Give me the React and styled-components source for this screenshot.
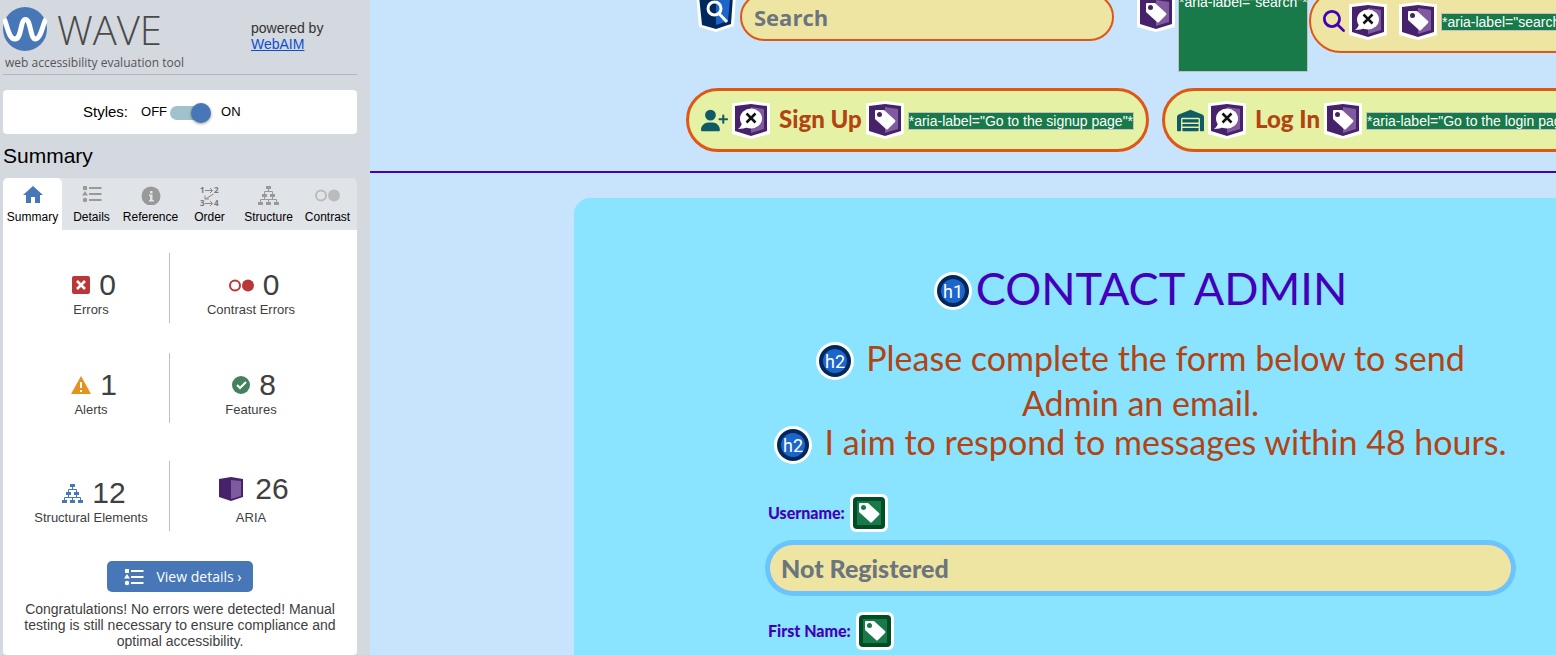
import React from "react";
import styled, { createGlobalStyle } from "styled-components";
import { FaUserPlus, FaWarehouse, FaMagnifyingGlass } from "react-icons/fa6";

const sans = '"Liberation Sans", Arial, sans-serif';
const open = '"Open Sans", "Noto Sans", sans-serif';
const display = 'Lato, "Open Sans", sans-serif';

const GlobalStyle = createGlobalStyle`
  *, *::before, *::after { box-sizing: border-box; }
  body { margin: 0; background: #c8e3fc; font-family: ${sans}; overflow: hidden; }
  h1, h2, p { margin: 0; font-weight: 400; }
  button, input { font-family: inherit; }
  svg { display: block; flex: none; }
`;

const Page = styled.div`
  display: flex;
  height: 100vh;
  overflow: hidden;
`;

/* ---------- sidebar ---------- */

const Sidebar = styled.aside`
  flex: 0 0 370px;
  display: flex;
  flex-direction: column;
  padding: 0 13px 0 3px;
  background: #d4d8df;
`;

const Brand = styled.header`
  display: flex;
  justify-content: space-between;
  height: 75px;
  border-bottom: 1px solid #b2b6bb;
  color: #4a4a4a;
`;

const BrandTop = styled.div`
  display: flex;
  align-items: center;
  gap: 10px;
  height: 48px;
  padding-top: 10px;
`;

const BrandName = styled.span`
  padding-top: 2px;
  font: 300 40px/44px ${open};
`;

const Tagline = styled.p`
  padding: 7px 0 0 2px;
  font: 400 12px/16px ${open};
  color: #555;
  white-space: nowrap;
`;

const Powered = styled.p`
  width: 106px;
  padding-top: 20px;
  font-size: 14px;
  line-height: 16px;
  color: #333;

  a { display: block; color: #0b4fd0; }
`;

const StylesBar = styled.div`
  display: flex;
  align-items: center;
  height: 44px;
  margin-top: 15px;
  padding: 0 0 2px 80px;
  border-radius: 4px;
  background: #fff;
  font-size: 13px;
  color: #000;
`;

const StylesLabel = styled.label`
  margin-right: 13px;
  font-size: 15px;
`;

const Toggle = styled.input`
  appearance: none;
  width: 38px;
  height: 14px;
  margin: 3px 13px 0 3px;
  border-radius: 7px;
  background: #a0c2cd;

  &::before {
    content: "";
    display: block;
    width: 20px;
    height: 20px;
    margin: -3px 0 0 21px;
    border-radius: 50%;
    background: #4777b6;
    box-shadow: 0 1px 3px rgba(0, 0, 0, 0.4);
  }
`;

const SummaryTitle = styled.h1`
  height: 44px;
  padding-top: 10px;
  font-size: 21px;
  line-height: 24px;
  color: #000;
`;

const Tabs = styled.nav`
  display: grid;
  grid-template-columns: repeat(6, 1fr);
  height: 52px;
  border-radius: 5px 5px 0 0;
  background: #e0e3e8;
`;

const Tab = styled.button`
  display: flex;
  flex-direction: column;
  align-items: center;
  justify-content: space-between;
  min-width: 0;
  padding: 7px 0 6px;
  border: 0;
  border-radius: 5px 5px 0 0;
  background: ${(p) => (p.$active ? "#fff" : "transparent")};
  color: #000;
  font-size: 12px;
  line-height: 14px;
  white-space: nowrap;
`;

const Panel = styled.section`
  flex: 1;
  display: flex;
  flex-direction: column;
  align-items: center;
  padding-top: 23px;
  border-radius: 0 0 4px 4px;
  background: #fff;
  color: #404040;
`;

const Stats = styled.div`
  align-self: flex-start;
  display: grid;
  grid-template-columns: 157px 162px;
  margin-left: 10px;
`;

const Stat = styled.div`
  height: 70px;
  margin-bottom: ${(p) => (p.$group ? 38 : 30)}px;
  padding-top: ${(p) => (p.$raised ? 10 : 14)}px;
  border-right: ${(p) => (p.$divided ? "1px solid #bfbfbf" : "0")};
  text-align: center;
`;

const StatCount = styled.div`
  display: flex;
  align-items: center;
  justify-content: center;
  gap: ${(p) => (p.$raised ? 12 : 9)}px;
  height: ${(p) => (p.$raised ? 39 : 35)}px;
  padding-left: 6px;
  padding-bottom: ${(p) => (p.$raised ? 4 : 0)}px;
  font-size: 30px;
  line-height: 34px;
`;

const StatLabel = styled.div`
  font-size: 13px;
  line-height: 15px;
`;

const DetailsButton = styled.button`
  display: flex;
  align-items: center;
  gap: 12px;
  height: 31px;
  padding: 0 11px 0 17px;
  border: 0;
  border-radius: 5px;
  background: #4777b6;
  color: #fff;
  font: 400 14px/20px ${open};
`;

const Note = styled.p`
  width: 330px;
  padding-top: 9px;
  font-size: 14px;
  line-height: 16px;
  text-align: center;
`;

/* ---------- evaluated page ---------- */

const Main = styled.main`
  flex: 1;
  min-width: 0;
  display: flex;
  flex-direction: column;
  overflow: hidden;
  background: #c8e3fc;
`;

const TopBar = styled.header`
  flex: none;
  border-bottom: 2px solid #4200b8;
  padding-bottom: 19px;
`;

const SearchRow = styled.form`
  display: flex;
  align-items: flex-end;
  height: 72px;
  padding-left: 326px;
`;

const Lifted = styled.span`
  flex: none;
  margin: 0 ${(p) => p.$after}px 40px ${(p) => p.$before || 0}px;
`;

const SearchInput = styled.input`
  flex: none;
  width: 374px;
  height: 48px;
  margin-bottom: 31px;
  padding: 0 12px;
  border: 2px solid #df5716;
  border-radius: 24px;
  background: #efe5a3;
  font: 700 22px/30px ${open};

  &::placeholder { color: #6c757d; opacity: 1; }
`;

const AriaBlock = styled.span`
  flex: none;
  width: 130px;
  height: 81px;
  border: 1px solid #c0c0c0;
  background: #177a48;
  color: #fff;
  font-size: 14px;
  line-height: 20px;
  white-space: nowrap;
`;

const SearchButton = styled.button`
  flex: none;
  display: flex;
  align-items: center;
  gap: 4px;
  height: 64px;
  margin: 0 0 19px 1px;
  padding: 0 12px;
  border: 2px solid #df5716;
  border-radius: 32px;
  background: #efe5a3;
  color: #4200b8;
`;

const LinkRow = styled.nav`
  display: flex;
  gap: 13px;
  padding: 16px 0 0 316px;
`;

const Pill = styled.a`
  flex: none;
  display: flex;
  align-items: center;
  gap: 4px;
  height: 64px;
  padding: 0 12px;
  border: 3px solid #df5716;
  border-radius: 32px;
  background: #e5f1a5;
  color: #b24313;
  text-decoration: none;
`;

const PillIcon = styled.span`
  color: #0f5b66;
`;

const PillText = styled.span`
  padding: 0 0 3px 5px;
  font: 900 24px/30px ${display};
`;

const AriaLabel = styled.span`
  height: 18px;
  margin-top: 2px;
  border: 1px solid #c0c0c0;
  background: #177a48;
  color: #fff;
  font-size: 14px;
  line-height: 16px;
  white-space: nowrap;
`;

const Card = styled.section`
  flex: 1 0 auto;
  margin: 25px 0 0 204px;
  padding: 65px 40px 0 191px;
  border-radius: 16px 0 0 0;
  background: #8ae3ff;
`;

const BadgeSlot = styled.span`
  flex: none;
  padding-top: 6px;
`;

const Title = styled.h1`
  display: flex;
  align-items: center;
  justify-content: center;
  gap: 4px;
  color: #4200b8;
  font: 400 45px/50px ${display};
  white-space: nowrap;
`;

const Lead = styled.h2`
  margin-top: ${(p) => p.$top}px;
  color: #b24313;
  font: 400 34px/45px ${display};
  text-align: center;
`;

const LeadLine = styled.span`
  display: flex;
  align-items: center;
  justify-content: center;
  gap: 12px;
  white-space: nowrap;
`;

const Fields = styled.form`
  display: flex;
  flex-direction: column;
  gap: 21px;
  padding-top: 30px;
`;

const FieldLabel = styled.label`
  display: flex;
  align-items: center;
  gap: 5px;
  padding-left: 3px;
  color: #4200b8;
  font: 900 16px/24px ${display};
`;

const FieldInput = styled.input`
  display: block;
  width: calc(100% - 10px);
  height: 46px;
  margin: 13px 5px 0;
  padding: 0 11px;
  border: 0;
  border-radius: 23px;
  background: #efe5a3;
  box-shadow: 0 0 0 1px #7dbaff, 0 0 0 5px #68c6ff;
  font: 900 25px/30px ${display};

  &::placeholder { color: #6c757d; opacity: 1; }
`;

/* ---------- drawings ---------- */

const WaveLogo = () => (
  <svg width="44" height="44" viewBox="0 0 44 44">
    <circle cx="22" cy="22" r="22" fill="#4777b6" />
    <path d="M1 12C4 16 5 32 12 32S17 12.500 22.500 12.500 27 32 32.500 32 40 16 43 12" fill="none" stroke="#fff" strokeWidth="5" />
  </svg>
);

const ListIcon = ({ color = "#999" }) => (
  <svg width="20" height="18" viewBox="0 0 20 18" fill={color}>
    <path d="M1 1h4v4H1zM3 6l3 4.500H0zM7 2h12.500v2H7zM7 8h12.500v2H7zM7 14h12.500v2H7z" />
    <circle cx="3" cy="15" r="2.200" />
  </svg>
);

const HomeIcon = () => (
  <svg width="20" height="20" viewBox="0 0 20 20" fill="#4777b6">
    <path d="M10 1L20 10h-3v8h-5v-6H8v6H3v-8H0z" />
  </svg>
);

const InfoIcon = () => (
  <svg width="20" height="20" viewBox="0 0 20 20">
    <circle cx="10" cy="11" r="9.500" fill="#999" />
    <path d="M9 6h2.500v2.500H9zM8 9.500h3.500V15H13v1.500H8V15h1v-4H8z" fill="#e0e3e8" />
  </svg>
);

const OrderIcon = () => (
  <svg width="24" height="24" viewBox="-2 -2 24 24" fill="#777" fontFamily="Open Sans, sans-serif" fontSize="8" fontWeight="700">
    <text x="0" y="6">1</text>
    <text x="14" y="6">2</text>
    <text x="0" y="19">3</text>
    <text x="14" y="19">4</text>
    <path d="M5 3.500h7.500M10 1l2.500 2.500L10 6M5 16.500h7.500M10 14l2.500 2.500L10 19M13.500 7L5.500 12M5 8.500V12h4" fill="none" stroke="#888" />
  </svg>
);

const TreeIcon = ({ color = "#999" }) => (
  <svg width="21" height="20" viewBox="0 0 21 20" fill={color}>
    <path d="M8 1h5v3H8zM4 9h5v3H4zM12 9h5v3h-5zM0 17h5v3H0zM8 17h5v3H8zM16 17h5v3h-5z" />
    <path d="M10.500 3v3M6.500 9V6.500h8V9M6.500 12v2M14.500 12v2M2.500 17v-2.500h16V17M10.500 14v3" fill="none" stroke={color} />
  </svg>
);

const ContrastIcon = ({ color = "#bbb" }) => (
  <svg width="25" height="20" viewBox="0 0 25 20">
    <circle cx="6" cy="10.500" r="5" fill="none" stroke={color} strokeWidth="2" />
    <circle cx="19" cy="10.500" r="6" fill={color} />
  </svg>
);

const ErrorIcon = () => (
  <svg width="18" height="18" viewBox="0 0 18 18">
    <rect width="18" height="18" rx="2" fill="#bb3636" />
    <path d="M5 5l8 8M13 5l-8 8" stroke="#fff" strokeWidth="2.500" />
  </svg>
);

const AlertIcon = () => (
  <svg width="20" height="18" viewBox="0 0 20 18">
    <path d="M10 0L20 18H0z" fill="#e6921e" />
    <path d="M9 6h2v6H9zM9 14h2v2H9z" fill="#fff" />
  </svg>
);

const FeatureIcon = () => (
  <svg width="18" height="18" viewBox="0 0 18 18">
    <circle cx="9" cy="9" r="9" fill="#43815f" />
    <path d="M5 9l3 3 6-6" fill="none" stroke="#fff" strokeWidth="2" />
  </svg>
);

const AriaIcon = () => (
  <svg width="24" height="24" viewBox="0 0 24 24">
    <path d="M0 2L12 0l12 2v18l-12 4-12-4z" fill="#46226b" />
    <path d="M12 3l10 1v15l-10 3z" fill="#7f5a9f" />
  </svg>
);

const TagShape = ({ hole }) => (
  <g>
    <path d="M10 9h8L29 19q1 1 0 2L22 28q-1 1-2 0L9 18V10q0-1 1-1z" fill="#fff" />
    <circle cx="13.500" cy="13.500" r="2.500" fill={hole} />
  </g>
);

const AriaBadge = ({ kind }) => (
  <svg width="38" height="38" viewBox="0 0 38 38">
    <path d="M0 2.500L19 0l19 2.500V33L19 38 0 33z" fill="#fff" />
    <path d="M3 5l16-2 16 2v25l-16 5-16-5z" fill="#46226b" />
    <path d="M19 6l13 2v20l-13 4z" fill="#7f5a9f" />
    {kind === "tag" ? (
      <TagShape hole="#46226b" />
    ) : (
      <g>
        <ellipse cx="19" cy="17.500" rx="11" ry="10" fill="#fff" />
        <path d="M10 21q0 4-4 7 6 0 10-2z" fill="#fff" />
        <path d="M14.500 12.500l9 9M23.500 12.500l-9 9" stroke="#111" strokeWidth="2.500" />
      </g>
    )}
  </svg>
);

const SearchBadge = () => (
  <svg width="40" height="42" viewBox="0 0 40 42">
    <path d="M0 3L20 0l20 3-2 33-18 6-17-5z" fill="#fff" />
    <path d="M3 6l17-3 17 3-2 28-15 5-14-4z" fill="#00285c" />
    <path d="M20 7l14 2-2 22-12 4z" fill="#1b66ca" />
    <circle cx="18.500" cy="18.500" r="6.500" fill="none" stroke="#fff" strokeWidth="3" />
    <path d="M23 23.500L31 32" stroke="#fff" strokeWidth="3" />
  </svg>
);

const TagBadge = () => (
  <svg width="38" height="38" viewBox="0 0 38 38">
    <rect width="38" height="38" rx="6" fill="#fff" />
    <rect x="3" y="3" width="32" height="32" rx="4" fill="#004d25" />
    <rect x="7" y="7" width="24" height="24" fill="#177a48" />
    <TagShape hole="#177a48" />
  </svg>
);

const HeadingBadge = ({ level }) => (
  <BadgeSlot>
    <svg width="38" height="38" viewBox="0 0 38 38">
      <circle cx="19" cy="19" r="19" fill="#fff" />
      <circle cx="19" cy="19" r="16" fill="#00285c" />
      <circle cx="19" cy="19" r="12" fill="#1b66ca" />
      <text x="19" y="26" textAnchor="middle" fill="#fff" fontFamily="Roboto, sans-serif" fontSize="18">
        {level}
      </text>
    </svg>
  </BadgeSlot>
);

/* ---------- content ---------- */

const tabs = [
  ["Summary", <HomeIcon />],
  ["Details", <ListIcon />],
  ["Reference", <InfoIcon />],
  ["Order", <OrderIcon />],
  ["Structure", <TreeIcon />],
  ["Contrast", <ContrastIcon />],
];

const stats = [
  { label: "Errors", count: 0, icon: <ErrorIcon /> },
  { label: "Contrast Errors", count: 0, icon: <ContrastIcon color="#bb3636" /> },
  { label: "Alerts", count: 1, icon: <AlertIcon />, group: true },
  { label: "Features", count: 8, icon: <FeatureIcon />, group: true },
  { label: "Structural Elements", count: 12, icon: <TreeIcon color="#4777b6" /> },
  { label: "ARIA", count: 26, icon: <AriaIcon />, raised: true },
];

const links = [
  ["Sign Up", "signup", <FaUserPlus size={27} />],
  ["Log In", "login", <FaWarehouse size={27} />],
];

export default function App() {
  return (
    <Page>
      <GlobalStyle />
      <Sidebar>
        <Brand>
          <div>
            <BrandTop>
              <WaveLogo />
              <BrandName>WAVE</BrandName>
            </BrandTop>
            <Tagline>web accessibility evaluation tool</Tagline>
          </div>
          <Powered>
            powered by <a href="#webaim">WebAIM</a>
          </Powered>
        </Brand>
        <StylesBar>
          <StylesLabel htmlFor="styles">Styles:</StylesLabel>
          <span>OFF</span>
          <Toggle id="styles" type="checkbox" role="switch" defaultChecked />
          <span>ON</span>
        </StylesBar>
        <SummaryTitle>Summary</SummaryTitle>
        <Tabs>
          {tabs.map(([name, icon], i) => (
            <Tab key={name} type="button" $active={i === 0}>
              {icon}
              {name}
            </Tab>
          ))}
        </Tabs>
        <Panel>
          <Stats>
            {stats.map((s, i) => (
              <Stat key={s.label} $divided={i % 2 === 0} $group={s.group} $raised={s.raised}>
                <StatCount $raised={s.raised}>
                  {s.icon}
                  {s.count}
                </StatCount>
                <StatLabel>{s.label}</StatLabel>
              </Stat>
            ))}
          </Stats>
          <DetailsButton type="button">
            <ListIcon color="#fff" />
            View details ›
          </DetailsButton>
          <Note>
            Congratulations! No errors were detected! Manual testing is still necessary to ensure
            compliance and optimal accessibility.
          </Note>
        </Panel>
      </Sidebar>

      <Main>
        <TopBar>
          <SearchRow>
            <Lifted $after={4}>
              <SearchBadge />
            </Lifted>
            <SearchInput type="search" placeholder="Search" aria-label="search" />
            <Lifted $before={23} $after={3}>
              <AriaBadge kind="tag" />
            </Lifted>
            <AriaBlock>*aria-label="search"*</AriaBlock>
            <SearchButton type="button">
              <FaMagnifyingGlass size={22} />
              <AriaBadge kind="hidden" />
              <PillIcon />
              <PillIcon />
              <AriaBadge kind="tag" />
              <AriaLabel>*aria-label="search"*</AriaLabel>
            </SearchButton>
          </SearchRow>
          <LinkRow>
            {links.map(([text, page, icon]) => (
              <Pill key={page} href={`#${page}`}>
                <PillIcon>{icon}</PillIcon>
                <AriaBadge kind="hidden" />
                <PillText>{text}</PillText>
                <AriaBadge kind="tag" />
                <AriaLabel>{`*aria-label="Go to the ${page} page"*`}</AriaLabel>
              </Pill>
            ))}
          </LinkRow>
        </TopBar>
        <Card>
          <Title>
            <HeadingBadge level="h1" />
            CONTACT ADMIN
          </Title>
          <Lead $top={22}>
            <LeadLine>
              <HeadingBadge level="h2" />
              Please complete the form below to send
            </LeadLine>
            <LeadLine>Admin an email.</LeadLine>
          </Lead>
          <Lead $top={-6}>
            <LeadLine>
              <HeadingBadge level="h2" />
              I aim to respond to messages within 48 hours.
            </LeadLine>
          </Lead>
          <Fields>
            <div>
              <FieldLabel htmlFor="username">
                Username:
                <TagBadge />
              </FieldLabel>
              <FieldInput id="username" placeholder="Not Registered" />
            </div>
            <div>
              <FieldLabel htmlFor="first-name">
                First Name:
                <TagBadge />
              </FieldLabel>
            </div>
          </Fields>
        </Card>
      </Main>
    </Page>
  );
}
